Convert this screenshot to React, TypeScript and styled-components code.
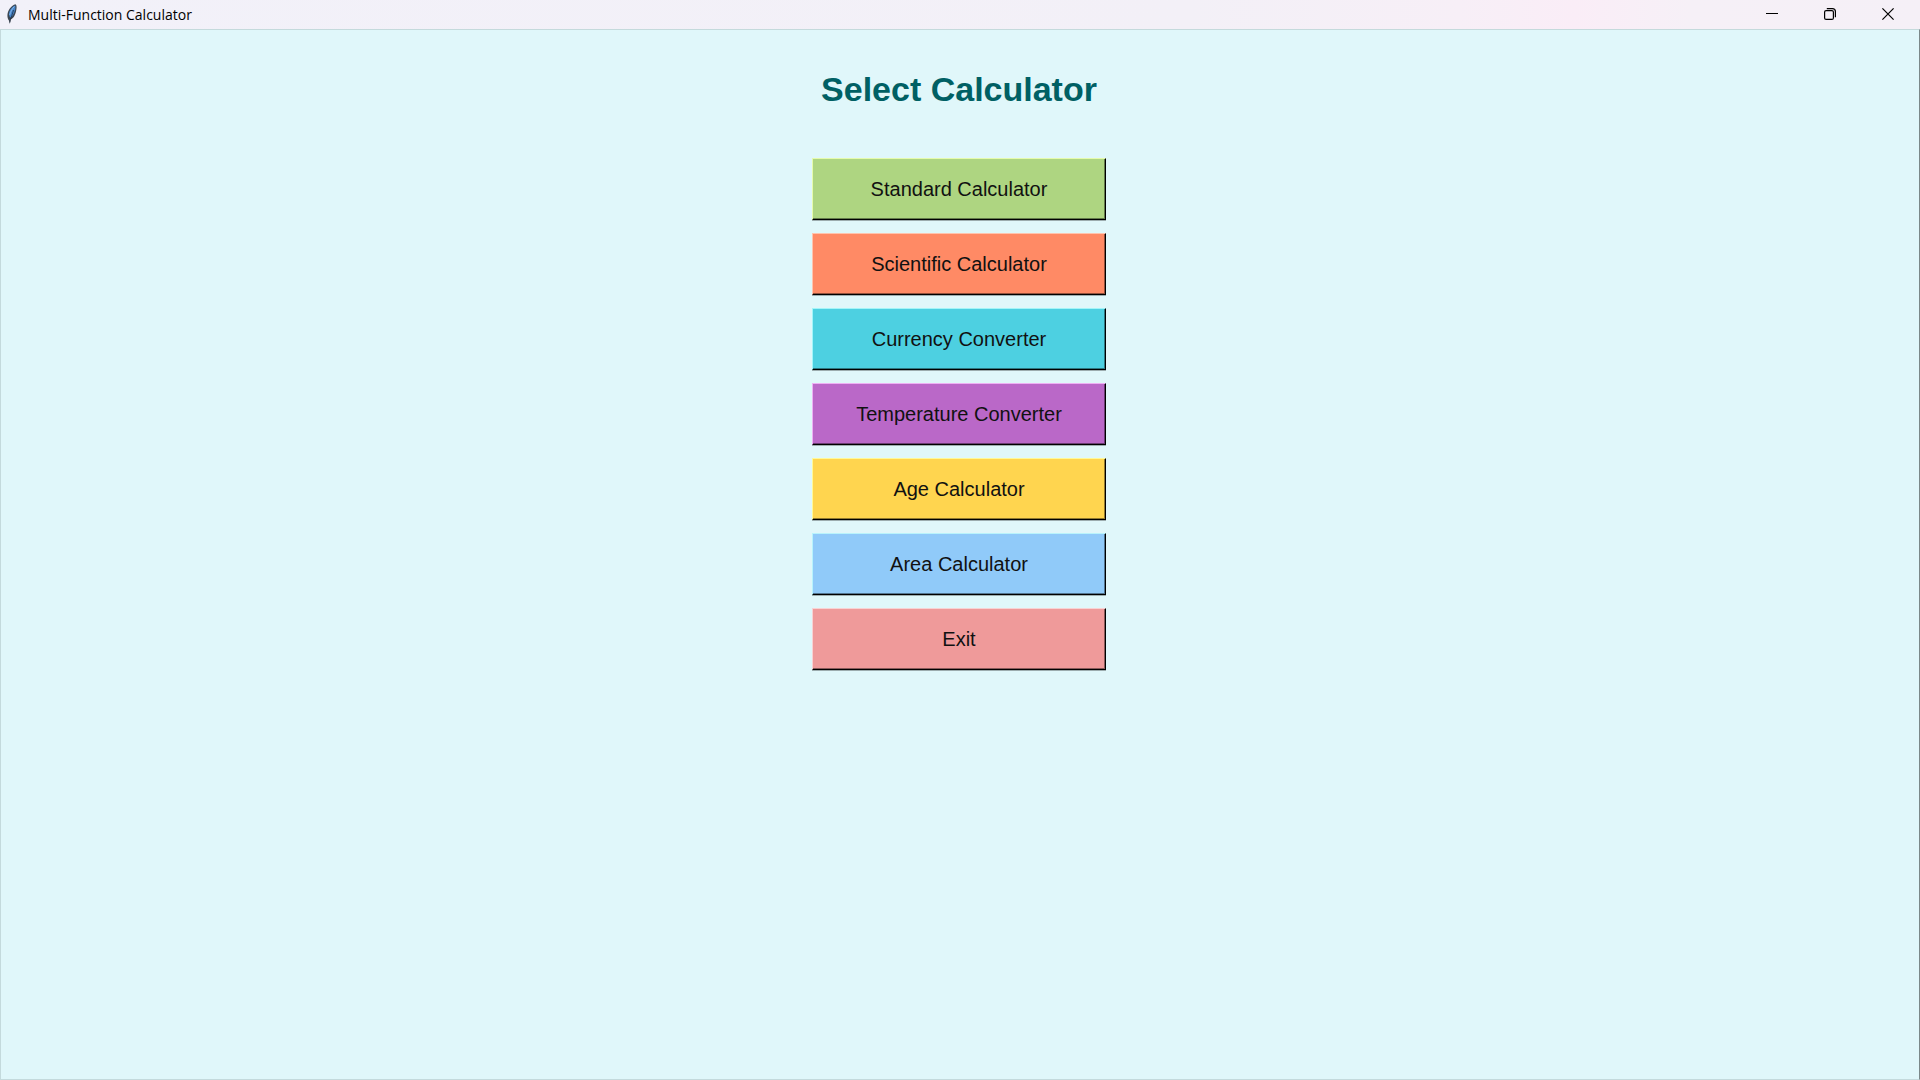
import React from "react";
import styled, { createGlobalStyle } from "styled-components";

const GlobalStyle = createGlobalStyle`
  *, *::before, *::after { box-sizing: border-box; }
  body { margin: 0; background: #e0f7fa; }
`;

const Window = styled.div`
  display: flex;
  flex-direction: column;
  min-height: 100vh;
  font-family: "Liberation Sans", Arial, sans-serif;
`;

const TitleBar = styled.header`
  display: flex;
  align-items: center;
  height: 29px;
  padding-left: 5px;
  background: linear-gradient(90deg, #f2f1f9 0%, #f3f0f7 62%, #f7eff7 76%, #faedf7 82%, #f6f0f7 88%, #f5f0f7 100%);
`;

const WindowTitle = styled.span`
  flex: 1;
  padding-left: 8px;
  color: #000;
  font-family: "Open Sans", "Noto Sans", sans-serif;
  font-size: 14px;
  line-height: 20px;
`;

const Controls = styled.div`
  display: flex;
  align-self: stretch;
`;

const ControlButton = styled.button`
  display: flex;
  align-items: center;
  justify-content: center;
  width: 58px;
  padding: 0 6px 1px 0;
  border: 0;
  background: transparent;
  color: #000;
`;

const Content = styled.main`
  flex: 1;
  display: flex;
  flex-direction: column;
  align-items: center;
  gap: 49px;
  padding: 39px 2px 0 0;
  border: 1px solid #c4dadc;
  border-right-color: #7b8889;
  background: #e0f7fa;
`;

const Heading = styled.h1`
  margin: 0;
  color: #006064;
  font-size: 34px;
  font-weight: 700;
  line-height: 40px;
`;

const Menu = styled.nav`
  display: flex;
  flex-direction: column;
  gap: 13px;
`;

const MenuButton = styled.button<{ $color: string; $light: string; $shade: string }>`
  width: 294px;
  height: 62px;
  padding: 0;
  border: 1px solid;
  border-color: ${(p) => p.$light} #000 #000 ${(p) => p.$light};
  background: ${(p) => p.$color};
  box-shadow: inset -1px -1px 0 ${(p) => p.$shade}, 0 1px 0 rgba(0, 0, 0, 0.3);
  color: #111;
  font-family: inherit;
  font-size: 20px;
  line-height: 24px;
`;

const items = [
  { label: "Standard Calculator", color: "#aed581", light: "#e6fbac", shade: "#637a4a" },
  { label: "Scientific Calculator", color: "#ff8a65", light: "#ffc4ae", shade: "#92503b" },
  { label: "Currency Converter", color: "#4dd0e1", light: "#a2f5f9", shade: "#2d7882" },
  { label: "Temperature Converter", color: "#ba68c8", light: "#eeb0f4", shade: "#6b3c73" },
  { label: "Age Calculator", color: "#ffd54f", light: "#fff998", shade: "#927a2e" },
  { label: "Area Calculator", color: "#90caf9", light: "#b8f3fc", shade: "#53748f" },
  { label: "Exit", color: "#ef9a9a", light: "#f8d2d3", shade: "#895959" },
];

const Feather = () => (
  <svg width="15" height="22" viewBox="0 0 15 22" aria-hidden="true">
    <path d="M10.5 0.200 C12 1 11.800 4 11 7.500 C10.200 11 8.500 14.500 5.500 15.500 L4.900 20 L3.900 16.500 C1.600 13.500 2.100 8 4.800 4.500 C6.500 2.200 8.500 0.600 10.500 0.200Z" fill="#3b4652" />
    <path d="M10.200 1.500 C11 4 9.800 9 6 13.800 C3.300 12.500 3.500 8 5.800 5 C7.200 3.200 8.600 2 10.200 1.500Z" fill="#4384cb" />
    <path d="M9.300 2.500 C7.500 4.500 5.400 7.500 4.700 11" fill="none" stroke="#8ab8e8" strokeWidth="1" />
    <path d="M8.500 6 C7.500 10 6 13 4.800 18.500" fill="none" stroke="#1b2735" strokeWidth="0.700" />
  </svg>
);

export default function App() {
  return (
    <Window>
      <GlobalStyle />
      <TitleBar>
        <Feather />
        <WindowTitle>Multi-Function Calculator</WindowTitle>
        <Controls>
          <ControlButton type="button" aria-label="Minimize">
            <svg width="12" height="12" viewBox="0 0 12 12" fill="none" stroke="currentColor">
              <path d="M0 5.500H12" />
            </svg>
          </ControlButton>
          <ControlButton type="button" aria-label="Restore">
            <svg width="12" height="12" viewBox="0 0 12 12" fill="none" stroke="currentColor" strokeWidth="1.200">
              <rect x="0.600" y="2.600" width="8.800" height="8.800" rx="1.500" />
              <path d="M2.800 0.600H8.400A3 3 0 0 1 11.400 3.600V9.200" />
            </svg>
          </ControlButton>
          <ControlButton type="button" aria-label="Close">
            <svg width="12" height="12" viewBox="0 0 12 12" fill="none" stroke="currentColor" strokeWidth="1.200">
              <path d="M0.400 0.400L11.600 11.600M11.600 0.400L0.400 11.600" />
            </svg>
          </ControlButton>
        </Controls>
      </TitleBar>
      <Content>
        <Heading>Select Calculator</Heading>
        <Menu aria-label="Calculators">
          {items.map((item) => (
            <MenuButton key={item.label} type="button" $color={item.color} $light={item.light} $shade={item.shade}>
              {item.label}
            </MenuButton>
          ))}
        </Menu>
      </Content>
    </Window>
  );
}
